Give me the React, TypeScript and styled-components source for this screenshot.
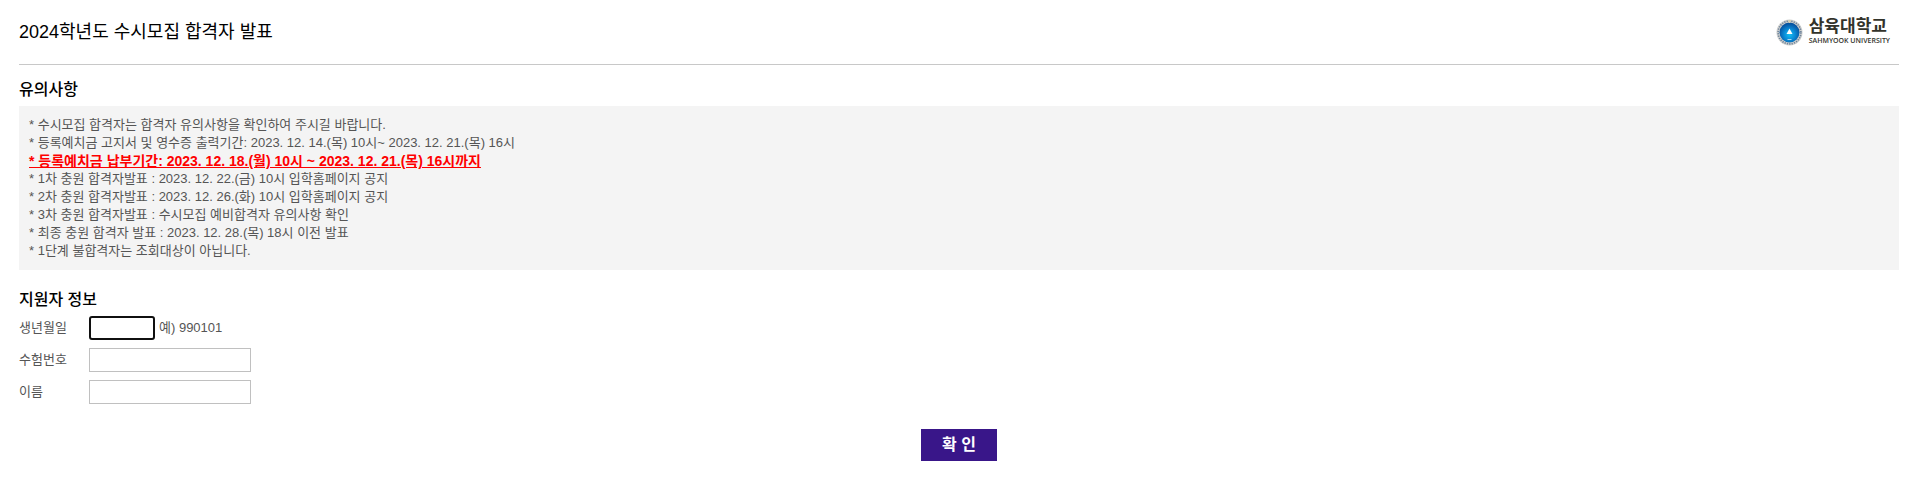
import React from "react";
import styled, { createGlobalStyle } from "styled-components";

const GlobalStyle = createGlobalStyle`
  * { box-sizing: border-box; }
  body {
    margin: 0;
    background: #fff;
    color: #555;
    font-family: "Liberation Sans", "Noto Sans CJK KR", sans-serif;
    font-size: 13px;
    line-height: 18px;
  }
`;

const Page = styled.main`
  padding: 0 17px 30px 19px;
`;

const Header = styled.header`
  display: flex;
  justify-content: space-between;
  align-items: center;
  height: 65px;
  padding: 0 9px 0 0;
  border-bottom: 1px solid #c8c8c8;
`;

const Title = styled.h1`
  margin: 0;
  color: #000;
  font-size: 18px;
  line-height: 24px;
  font-weight: 400;
`;

const Logo = styled.a`
  display: flex;
  align-items: center;
  gap: 6px;
  color: #33332b;
  text-decoration: none;
`;

const LogoText = styled.span`
  display: flex;
  flex-direction: column;
`;

const LogoName = styled.span`
  font-size: 17px;
  line-height: 18px;
  font-weight: 700;
`;

const LogoSub = styled.span`
  font-family: "Open Sans", sans-serif;
  font-size: 7px;
  line-height: 10px;
  font-weight: 600;
`;

const Heading = styled.h2`
  margin: 0;
  color: #000;
  font-size: 16px;
  line-height: 20px;
  font-weight: 500;
`;

const NoticeSection = styled.section`
  display: flex;
  flex-direction: column;
  gap: 6px;
  padding-top: 15px;
`;

const NoticeList = styled.ul`
  margin: 0;
  padding: 10px;
  list-style: none;
  background: #f4f4f4;
`;

const NoticeItem = styled.li<{ $strong?: boolean }>`
  ${(p) => p.$strong && "color: #f00; font-size: 14px; font-weight: 700; text-decoration: underline;"}
`;

const Form = styled.form`
  padding-top: 20px;
`;

const Fields = styled.div`
  display: flex;
  flex-direction: column;
  gap: 8px;
  padding-top: 6px;
`;

const Field = styled.div`
  display: flex;
  align-items: center;
  height: 24px;
`;

const Label = styled.label`
  width: 70px;
`;

const Input = styled.input<{ $short?: boolean }>`
  width: ${(p) => (p.$short ? 66 : 162)}px;
  height: 24px;
  padding: 0 4px;
  border: ${(p) => (p.$short ? "2px solid #101010" : "1px solid #c0c0c0")};
  border-radius: ${(p) => (p.$short ? 3 : 0)}px;
  background: #fff;
  font: inherit;
  outline: none;
`;

const Hint = styled.span`
  padding-left: 4px;
`;

const Actions = styled.div`
  display: flex;
  justify-content: center;
  padding-top: 25px;
`;

const Submit = styled.button`
  width: 76px;
  height: 32px;
  padding: 0;
  border: 0;
  background: #391689;
  color: #fff;
  font-family: inherit;
  font-size: 16px;
  font-weight: 700;
  line-height: 20px;
  cursor: pointer;
`;

const notices: { text: string; strong?: boolean }[] = [
  { text: "* 수시모집 합격자는 합격자 유의사항을 확인하여 주시길 바랍니다." },
  { text: "* 등록예치금 고지서 및 영수증 출력기간: 2023. 12. 14.(목) 10시~ 2023. 12. 21.(목) 16시" },
  { text: "* 등록예치금 납부기간: 2023. 12. 18.(월) 10시 ~ 2023. 12. 21.(목) 16시까지", strong: true },
  { text: "* 1차 충원 합격자발표 : 2023. 12. 22.(금) 10시 입학홈페이지 공지" },
  { text: "* 2차 충원 합격자발표 : 2023. 12. 26.(화) 10시 입학홈페이지 공지" },
  { text: "* 3차 충원 합격자발표 : 수시모집 예비합격자 유의사항 확인" },
  { text: "* 최종 충원 합격자 발표 : 2023. 12. 28.(목) 18시 이전 발표" },
  { text: "* 1단계 불합격자는 조회대상이 아닙니다." },
];

const Emblem = () => (
  <svg width="27" height="27" viewBox="0 0 27 27" aria-hidden="true">
    <defs>
      <radialGradient id="emblemBlue" cx="50%" cy="60%" r="55%">
        <stop offset="0" stopColor="#14c0f4" />
        <stop offset="0.5" stopColor="#0a8ad6" />
        <stop offset="1" stopColor="#07529f" />
      </radialGradient>
    </defs>
    <circle cx="13.5" cy="13.5" r="13" fill="#cfd0ce" />
    <circle cx="13.5" cy="13.5" r="11.4" fill="none" stroke="#6d839c" strokeWidth="1.6" strokeDasharray="1.3 1.1" />
    <circle cx="13.5" cy="13.5" r="10" fill="url(#emblemBlue)" />
    <path d="M12 1h3l-1 3h-1z" fill="#d8cfae" />
    <path d="M13.5 9.5l3 5.5h-6z" fill="#fff" />
    <path d="M11.5 20.5h4" stroke="#a9d8f2" strokeWidth="1" />
  </svg>
);

export default function App() {
  return (
    <>
      <GlobalStyle />
      <Page>
        <Header>
          <Title>2024학년도 수시모집 합격자 발표</Title>
          <Logo href="#">
            <Emblem />
            <LogoText>
              <LogoName>삼육대학교</LogoName>
              <LogoSub>SAHMYOOK UNIVERSITY</LogoSub>
            </LogoText>
          </Logo>
        </Header>

        <NoticeSection>
          <Heading>유의사항</Heading>
          <NoticeList>
            {notices.map((n) => (
              <NoticeItem key={n.text} $strong={n.strong}>{n.text}</NoticeItem>
            ))}
          </NoticeList>
        </NoticeSection>

        <Form onSubmit={(e) => e.preventDefault()}>
          <Heading>지원자 정보</Heading>
          <Fields>
            <Field>
              <Label htmlFor="birth">생년월일</Label>
              <Input id="birth" $short maxLength={6} aria-describedby="birth-hint" />
              <Hint id="birth-hint">예) 990101</Hint>
            </Field>
            <Field>
              <Label htmlFor="examNo">수험번호</Label>
              <Input id="examNo" />
            </Field>
            <Field>
              <Label htmlFor="name">이름</Label>
              <Input id="name" />
            </Field>
          </Fields>
          <Actions>
            <Submit type="submit">확 인</Submit>
          </Actions>
        </Form>
      </Page>
    </>
  );
}
